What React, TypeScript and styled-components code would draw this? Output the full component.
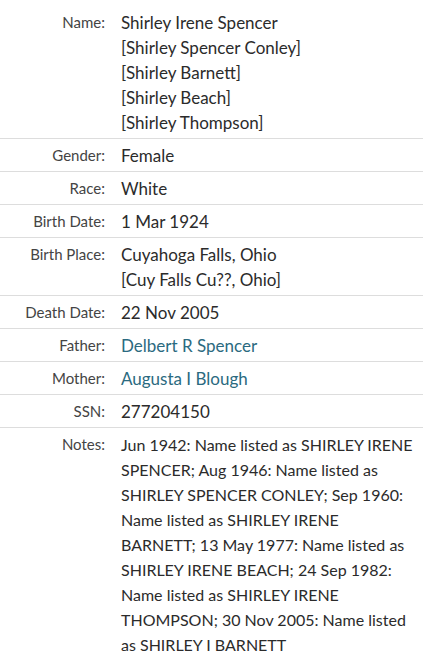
import styled, { createGlobalStyle } from "styled-components";

type Fact = {
  label: string;
  values: string[];
  link?: boolean;
  compact?: boolean;
};

const facts: Fact[] = [
  {
    label: "Name",
    values: [
      "Shirley Irene Spencer",
      "[Shirley Spencer Conley]",
      "[Shirley Barnett]",
      "[Shirley Beach]",
      "[Shirley Thompson]",
    ],
  },
  { label: "Gender", values: ["Female"] },
  { label: "Race", values: ["White"] },
  { label: "Birth Date", values: ["1 Mar 1924"] },
  {
    label: "Birth Place",
    values: ["Cuyahoga Falls, Ohio", "[Cuy Falls Cu??, Ohio]"],
  },
  { label: "Death Date", values: ["22 Nov 2005"] },
  { label: "Father", values: ["Delbert R Spencer"], link: true },
  { label: "Mother", values: ["Augusta I Blough"], link: true },
  { label: "SSN", values: ["277204150"] },
  {
    label: "Notes",
    compact: true,
    // broken where the source page wraps
    values: [
      "Jun 1942: Name listed as SHIRLEY IRENE",
      "SPENCER; Aug 1946: Name listed as",
      "SHIRLEY SPENCER CONLEY; Sep 1960:",
      "Name listed as SHIRLEY IRENE",
      "BARNETT; 13 May 1977: Name listed as",
      "SHIRLEY IRENE BEACH; 24 Sep 1982:",
      "Name listed as SHIRLEY IRENE",
      "THOMPSON; 30 Nov 2005: Name listed",
      "as SHIRLEY I BARNETT",
    ],
  },
];

function App() {
  // render
  return (
    <>
      <GlobalStyle />
      <FactTable>
        {facts.map((fact) => (
          <FactRow key={fact.label}>
            <Label>{fact.label}:</Label>
            <Values $compact={fact.compact}>
              {fact.values.map((value, i) =>
                fact.link ? (
                  <LinkValue key={i} href="#">
                    {value}
                  </LinkValue>
                ) : (
                  <Value key={i}>{value}</Value>
                )
              )}
            </Values>
          </FactRow>
        ))}
      </FactTable>
    </>
  );
}

const GlobalStyle = createGlobalStyle`
  html, body {
    margin: 0;
    padding: 0;
    background: #ffffff;
  }

  body {
    font-family: "Source Sans Pro", Lato, "Liberation Sans", sans-serif;
    color: #333333;
  }
`;

const FactTable = styled.div`
  width: 423px;
  padding-top: 6px;
`;

const FactRow = styled.div`
  display: grid;
  grid-template-columns: 105px 1fr;
  column-gap: 16px;
  padding: 4px 0 3px;
  border-bottom: 1px solid #dddddd;

  &:last-child {
    border-bottom: none;
  }
`;

const Label = styled.div`
  text-align: right;
  font-size: 15px;
  line-height: 25px;
  color: #444444;
`;

const Values = styled.div<{ $compact?: boolean }>`
  display: flex;
  flex-direction: column;
  font-size: ${({ $compact }) => ($compact ? "16px" : "17px")};
  line-height: 25px;
`;

const Value = styled.span`
  color: #2b2b2b;
  white-space: nowrap;
`;

const LinkValue = styled.a`
  color: #2b6a80;
  text-decoration: none;
`;

export default App;
